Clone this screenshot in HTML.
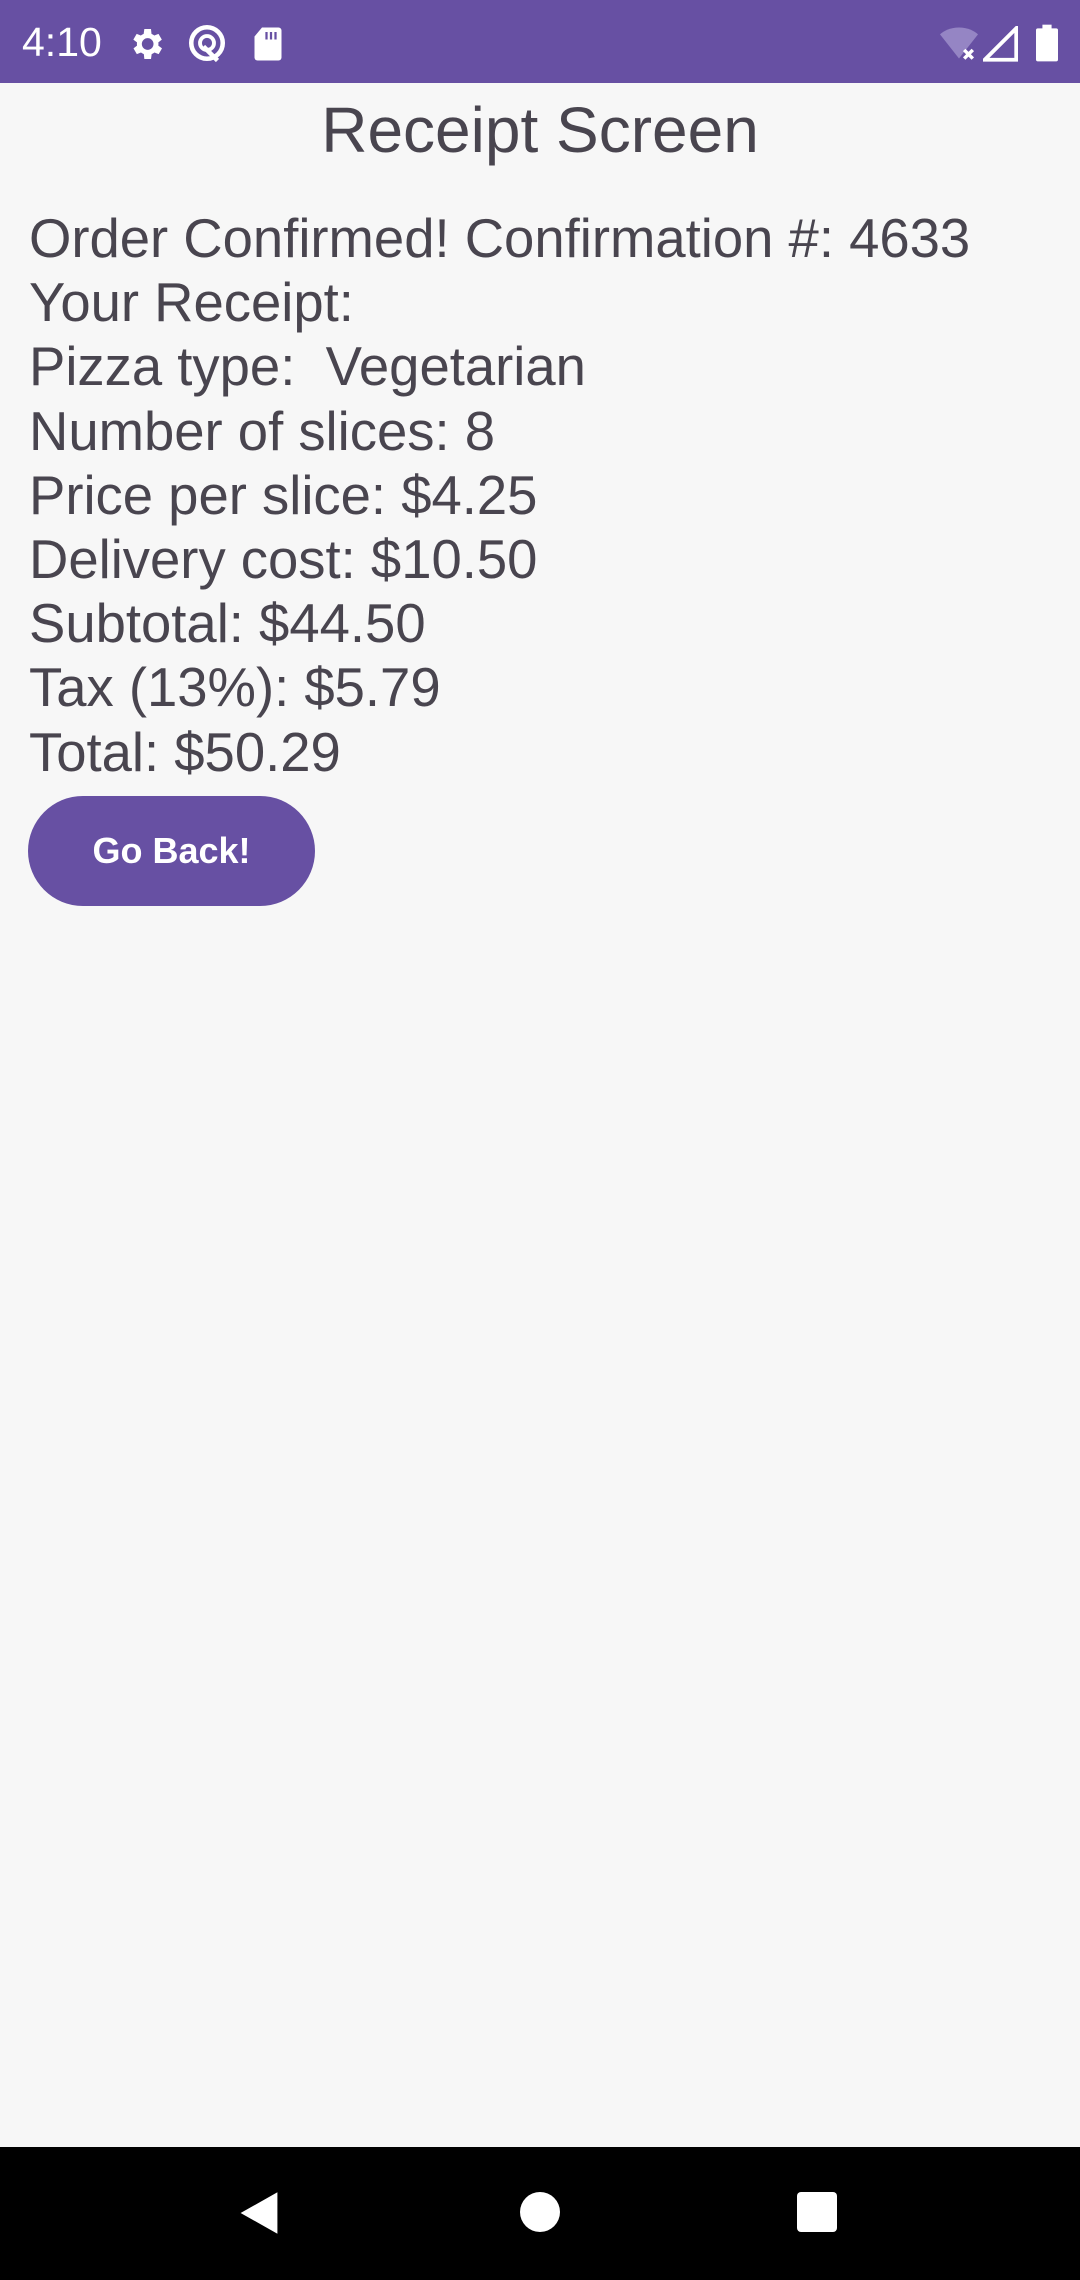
<!DOCTYPE html>
<html><head><meta charset="utf-8"><style>
html,body{margin:0;padding:0;}
body{width:1080px;height:2280px;background:#f7f7f7;position:relative;overflow:hidden;font-family:"Liberation Sans",sans-serif;color:#49454f;}
.sb{position:absolute;left:0;top:0;width:1080px;height:83px;background:#6750a3;}
.time{position:absolute;left:22px;top:19px;color:#fff;font-size:41px;}
.title{position:absolute;left:0;width:1080px;top:92px;text-align:center;font-size:64px;line-height:76px;}
.body{position:absolute;left:29px;top:206px;font-size:55px;line-height:64.2px;transform:scaleX(0.99);transform-origin:left top;white-space:pre;}
.btn{position:absolute;left:28px;top:796px;width:287px;height:110px;border-radius:55px;background:#6750a3;color:#fff;font-size:36px;font-weight:bold;text-align:center;line-height:110px;}
.nav{position:absolute;left:0;top:2147px;width:1080px;height:133px;background:#000;}
</style></head><body>
<div class="sb">
<div class="time">4:10</div>
<svg style="position:absolute;left:126px;top:24px" width="40" height="40" viewBox="0 0 24 24"><path fill="#fff" d="M19.4 13a7.5 7.5 0 0 0 0-2l2.1-1.6-2-3.5-2.5 1a7 7 0 0 0-1.7-1L15 3h-4l-.4 2.9a7 7 0 0 0-1.7 1l-2.5-1-2 3.5L6.6 11a7.5 7.5 0 0 0 0 2l-2.1 1.6 2 3.5 2.5-1a7 7 0 0 0 1.7 1L11 21h4l.4-2.9a7 7 0 0 0 1.7-1l2.5 1 2-3.5zM13 15.5A3.5 3.5 0 1 1 13 8.5a3.5 3.5 0 0 1 0 7z"/></svg>
<svg style="position:absolute;left:186px;top:22px" width="42" height="42" viewBox="0 0 24 24"><circle cx="12" cy="12" r="9" fill="none" stroke="#fff" stroke-width="2.6"/><circle cx="12" cy="12" r="4" fill="none" stroke="#fff" stroke-width="2.2"/><path d="M10 14l8 8" stroke="#fff" stroke-width="2.6"/></svg>
<svg style="position:absolute;left:253px;top:26px" width="30" height="36" viewBox="0 0 20 24"><path fill="#fff" d="M6 1h11a2 2 0 0 1 2 2v18a2 2 0 0 1-2 2H3a2 2 0 0 1-2-2V7z"/><path d="M9 4v5M12 4v5M15 4v5" stroke="#6750a3" stroke-width="1.5"/></svg>
<svg style="position:absolute;left:938px;top:24px" width="42" height="38" viewBox="0 0 24 22"><path fill="#9585c4" d="M12 2C7 2 3 4 1 6l11 14 11-14C21 4 17 2 12 2z"/><path d="M15 15l5 5M20 15l-5 5" stroke="#fff" stroke-width="2"/></svg>
<svg style="position:absolute;left:983px;top:26px" width="35" height="36" viewBox="0 0 20 20"><path d="M19 1v18H1z" fill="none" stroke="#fff" stroke-width="2.2"/></svg>
<svg style="position:absolute;left:1036px;top:24px" width="22" height="38" viewBox="0 0 12 20"><rect x="0" y="2" width="12" height="18" rx="1" fill="#fff"/><rect x="3.5" y="0" width="5" height="3" fill="#fff"/></svg>
</div>
<div class="title">Receipt Screen</div>
<div class="body">Order Confirmed! Confirmation #: 4633
Your Receipt:
Pizza type:  Vegetarian
Number of slices: 8
Price per slice: $4.25
Delivery cost: $10.50
Subtotal: $44.50
Tax (13%): $5.79
Total: $50.29</div>
<div class="btn">Go Back!</div>
<div class="nav">
<svg style="position:absolute;left:236px;top:43px" width="46" height="46" viewBox="0 0 20 20"><path d="M18 1v18L2 10z" fill="#fff"/></svg>
<div style="position:absolute;left:520px;top:45px;width:40px;height:40px;border-radius:50%;background:#fff"></div>
<div style="position:absolute;left:797px;top:45px;width:40px;height:40px;border-radius:4px;background:#fff"></div>
</div>
</body></html>
